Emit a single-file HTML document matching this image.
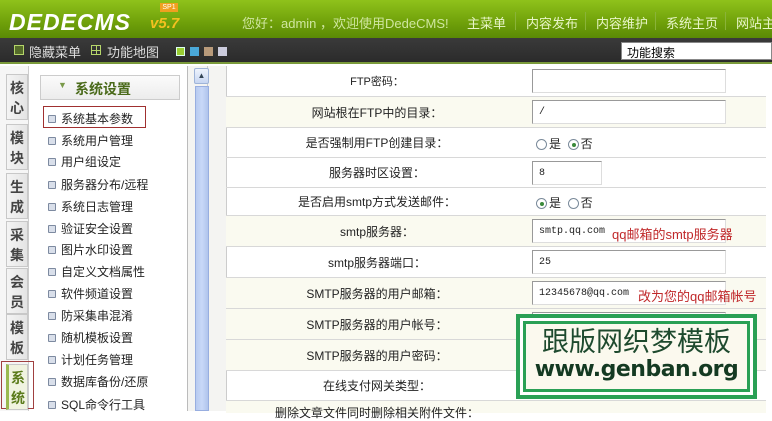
<!DOCTYPE html>
<html><head><meta charset="utf-8"><style>
*{margin:0;padding:0;box-sizing:border-box}
body{width:772px;height:411px;overflow:hidden;position:relative;font-family:"Liberation Sans","Noto Sans CJK SC","WenQuanYi Zen Hei",sans-serif;font-size:12px;color:#222;background:#fff}
.a{position:absolute;white-space:nowrap}
#hd{left:0;top:0;width:772px;height:38px;background:linear-gradient(#8fc21b,#6fa00a 60%,#5a8a05);overflow:hidden}
#tb{left:0;top:38px;width:772px;height:26px;background:linear-gradient(#3a3a3a,#2b2b2b);border-bottom:2px solid #7a9a3a}
.nav{top:13px;color:#e8f5c8;font-size:13px}
.sep{top:12px;width:1px;height:18px;background:#8ab33a}
.tab{left:6px;width:22px;height:46px;background:linear-gradient(90deg,#f4f4f4,#e4e4e4);border:1px solid #c8c8c8;font-size:14px;font-weight:bold;color:#444;text-align:center;line-height:20px;padding-top:3px}
.mi{left:48px;font-size:12px;color:#222}
.mi:before{content:"";position:absolute;left:-13px;top:5px;width:6px;height:6px;border:1px solid #7d8aa0;background:#d9dfea;border-radius:1px}
.row{left:226px;width:540px;border-bottom:1px solid #d8d8d8}
.lb{position:absolute;left:0;width:302px;text-align:center;font-size:12px}
.inp{position:absolute;left:306px;height:24px;border:1px solid #999;border-right-color:#ddd;border-bottom-color:#ddd;background:#fff;font-family:"Liberation Mono",monospace;font-size:10px;padding:6px 6px 0}
.rd{display:inline-block;width:11px;height:11px;border:1px solid #7a8a9a;border-radius:50%;vertical-align:-2px;margin-right:2px;background:#fff;position:relative}
.rd.on:after{content:"";position:absolute;left:3px;top:3px;width:4px;height:4px;border-radius:50%;background:#3a8a3a}
.red{color:#c0282a;font-size:13px}
</style></head><body>
<div id="hd" class="a">
 <div class="a" style="left:9px;top:9px;font-size:23px;font-weight:900;font-style:italic;color:#fff;letter-spacing:1px;font-family:'Liberation Sans',sans-serif">DEDECMS</div>
 <div class="a" style="left:150px;top:15px;font-size:15px;font-weight:bold;font-style:italic;color:#f4c020">v5.7</div>
 <div class="a" style="left:160px;top:3px;width:18px;height:9px;background:#f0a020;font-size:7px;color:#fff;line-height:9px;text-align:center">SP1</div>
 <div class="a" style="left:242px;top:13px;color:#cfe6a0;font-size:13px">您好：admin ，欢迎使用DedeCMS!</div>
 <div class="a nav" style="left:467px">主菜单</div><div class="a sep" style="left:515px"></div>
 <div class="a nav" style="left:526px">内容发布</div><div class="a sep" style="left:585px"></div>
 <div class="a nav" style="left:596px">内容维护</div><div class="a sep" style="left:655px"></div>
 <div class="a nav" style="left:666px">系统主页</div><div class="a sep" style="left:725px"></div>
 <div class="a nav" style="left:736px">网站主</div>
</div>
<div id="tb" class="a">
 <div class="a" style="left:14px;top:7px;width:10px;height:10px;border:1px solid #b5d56a;background:#556b2a"></div>
 <div class="a" style="left:29px;top:4px;color:#ddd;font-size:13px">隐藏菜单</div>
 <div class="a" style="left:91px;top:7px;width:10px;height:10px;border:1px solid #b5d56a;background:linear-gradient(#b5d56a,#b5d56a) 4px 0/1px 10px no-repeat,linear-gradient(#b5d56a,#b5d56a) 0 4px/10px 1px no-repeat"></div>
 <div class="a" style="left:107px;top:4px;color:#ddd;font-size:13px">功能地图</div>
 <div class="a" style="left:176px;top:9px;width:9px;height:9px;background:#9acd32;border:1px solid #dfe"></div>
 <div class="a" style="left:190px;top:9px;width:9px;height:9px;background:#4aa8d8"></div>
 <div class="a" style="left:204px;top:9px;width:9px;height:9px;background:#b89a7a"></div>
 <div class="a" style="left:218px;top:9px;width:9px;height:9px;background:#ccd"></div>
 <div class="a" style="left:621px;top:4px;width:151px;height:18px;background:#fff;border:1px solid #888;font-size:12px;padding:1px 5px;color:#000">功能搜索</div>
</div>
<div class="a" style="left:0;top:66px;width:29px;height:345px;background:#f6f6f6;border-right:1px solid #ccc"></div>
<div class="a tab" style="top:74px">核<br>心</div>
<div class="a tab" style="top:124px">模<br>块</div>
<div class="a tab" style="top:173px">生<br>成</div>
<div class="a tab" style="top:221px">采<br>集</div>
<div class="a tab" style="top:268px">会<br>员</div>
<div class="a tab" style="top:314px">模<br>板</div>
<div class="a" style="left:1px;top:361px;width:33px;height:48px;border:1px solid #a04040"></div>
<div class="a tab" style="top:364px;background:#f0f3e0;border-left:3px solid #9aba50;color:#5a7a1a">系<br>统</div>
<div class="a" style="left:187px;top:66px;width:1px;height:345px;background:#bbb"></div>
<div class="a" style="left:40px;top:75px;width:140px;height:25px;background:linear-gradient(#fbfbfb,#ececec);border:1px solid #ccc"></div>
<div class="a" style="left:58px;top:80px;color:#7a9a4a;font-size:9px">▼</div>
<div class="a" style="left:75px;top:79px;font-size:14px;font-weight:bold;color:#4a6a1a">系统设置</div>
<div class="a" style="left:43px;top:106px;width:103px;height:22px;border:1px solid #a03030"></div>
<div class="a mi" style="top:110px;left:61px">系统基本参数</div>
<div class="a mi" style="top:132px;left:61px">系统用户管理</div>
<div class="a mi" style="top:153px;left:61px">用户组设定</div>
<div class="a mi" style="top:176px;left:61px">服务器分布/远程</div>
<div class="a mi" style="top:198px;left:61px">系统日志管理</div>
<div class="a mi" style="top:220px;left:61px">验证安全设置</div>
<div class="a mi" style="top:241px;left:61px">图片水印设置</div>
<div class="a mi" style="top:263px;left:61px">自定义文档属性</div>
<div class="a mi" style="top:285px;left:61px">软件频道设置</div>
<div class="a mi" style="top:307px;left:61px">防采集串混淆</div>
<div class="a mi" style="top:329px;left:61px">随机模板设置</div>
<div class="a mi" style="top:351px;left:61px">计划任务管理</div>
<div class="a mi" style="top:373px;left:61px">数据库备份/还原</div>
<div class="a mi" style="top:396px;left:61px">SQL命令行工具</div>
<div class="a" style="left:188px;top:66px;width:38px;height:345px;background:#f4f4f2"></div>
<div class="a" style="left:207px;top:66px;width:1px;height:345px;background:#ccc"></div>
<div class="a" style="left:194px;top:68px;width:15px;height:16px;background:linear-gradient(#eef3fc,#c7d6f2);border:1px solid #9fb4d8;border-radius:2px;font-size:8px;color:#345;text-align:center;line-height:14px">▲</div>
<div class="a" style="left:195px;top:86px;width:14px;height:325px;background:linear-gradient(90deg,#b8cbf0,#c8d8f8,#b0c4ec);border:1px solid #98aee0"></div>
<div class="a" style="left:226px;top:66px;width:546px;height:345px;background:#fff;border-left:1px solid #ccc"></div>
<div class="a row" style="top:66px;height:31px"><div class="lb" style="top:7px;font-size:11px">FTP密码：</div><div class="inp" style="top:3px;width:194px"></div></div>
<div class="a row" style="top:97px;height:31px;background:#fafaf0"><div class="lb" style="top:7px">网站根在FTP中的目录：</div><div class="inp" style="top:3px;width:194px">/</div></div>
<div class="a row" style="top:128px;height:30px"><div class="lb" style="top:6px">是否强制用FTP创建目录：</div><div style="position:absolute;left:310px;top:7px"><span class="rd"></span>是 &nbsp;<span class="rd on"></span>否</div></div>
<div class="a row" style="top:158px;height:30px"><div class="lb" style="top:6px">服务器时区设置：</div><div class="inp" style="top:3px;width:70px">8</div></div>
<div class="a row" style="top:188px;height:28px"><div class="lb" style="top:5px">是否启用smtp方式发送邮件：</div><div style="position:absolute;left:310px;top:6px"><span class="rd on"></span>是 &nbsp;<span class="rd"></span>否</div></div>
<div class="a row" style="top:216px;height:31px;background:#fafaf0"><div class="lb" style="top:7px">smtp服务器：</div><div class="inp" style="top:3px;width:194px">smtp.qq.com</div><div class="red" style="position:absolute;left:386px;top:8px">qq邮箱的smtp服务器</div></div>
<div class="a row" style="top:247px;height:31px"><div class="lb" style="top:7px">smtp服务器端口：</div><div class="inp" style="top:3px;width:194px">25</div></div>
<div class="a row" style="top:278px;height:31px;background:#fafaf0"><div class="lb" style="top:7px">SMTP服务器的用户邮箱：</div><div class="inp" style="top:3px;width:194px">12345678@qq.com</div><div class="red" style="position:absolute;left:412px;top:8px">改为您的qq邮箱帐号</div></div>
<div class="a row" style="top:309px;height:31px;background:#fafaf0"><div class="lb" style="top:7px">SMTP服务器的用户帐号：</div><div class="inp" style="top:3px;width:194px"></div></div>
<div class="a row" style="top:340px;height:31px;background:#fafaf0"><div class="lb" style="top:7px">SMTP服务器的用户密码：</div></div>
<div class="a row" style="top:371px;height:30px"><div class="lb" style="top:6px">在线支付网关类型：</div></div>
<div class="a row" style="top:401px;height:12px;background:#fafaf0;border:none"><div class="lb" style="top:3px">删除文章文件同时删除相关附件文件：</div></div>
<div class="a" style="left:516px;top:314px;width:241px;height:85px;border:4px solid #2aa055;background:#fff">
 <div style="position:absolute;left:3px;top:3px;right:3px;bottom:3px;border:3px solid #2aa055;background:#fbf9ee;text-align:center;overflow:hidden">
  <div style="font-size:27px;line-height:32px;color:#1e4a2e;margin-top:2px">跟版网织梦模板</div>
  <div style="font-size:22px;line-height:24px;font-weight:bold;color:#143a22;font-family:'DejaVu Sans',sans-serif;letter-spacing:-0.5px">www.genban.org</div>
 </div>
</div>
</body></html>
